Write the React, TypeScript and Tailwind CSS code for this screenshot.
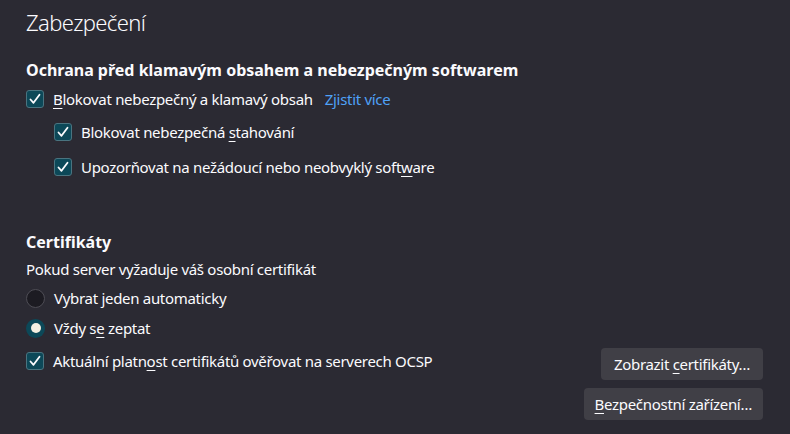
import React from 'react';

const font = { fontFamily: '"Noto Sans", "Open Sans", sans-serif' };

const Check: React.FC = () => (
  <div className="w-[18px] h-[18px] shrink-0 rounded-[3px] bg-[#0c4858] border border-[#4a7480] flex items-center justify-center">
    <svg width="12" height="12" viewBox="0 0 12 12" fill="none">
      <path d="M1.5 6.5 L4.5 9.8 L10.5 1.8" stroke="#fbfbfe" strokeWidth="1.8" strokeLinecap="round" strokeLinejoin="round" />
    </svg>
  </div>
);

const Radio: React.FC<{ checked?: boolean }> = ({ checked }) =>
  checked ? (
    <div className="w-[19px] h-[19px] shrink-0 rounded-full bg-[#0c4858] flex items-center justify-center">
      <div className="w-[10px] h-[10px] rounded-full bg-[#f4efe1]" />
    </div>
  ) : (
    <div className="w-[19px] h-[19px] shrink-0 rounded-full bg-[#1c1b22] border border-[#4e4d55]" />
  );

const U: React.FC<{ children: React.ReactNode }> = ({ children }) => (
  <span className="underline underline-offset-[3px]">{children}</span>
);

export default function App() {
  return (
    <div style={font} className="w-[790px] h-[434px] overflow-hidden bg-[#2b2a33] text-[#fbfbfe] px-[26px] text-[15px] tracking-[-0.3px]">
      <div className="h-[44px] flex items-center text-[22px] font-light tracking-[-0.6px]">Zabezpečení</div>

      {/* Klamavý obsah */}
      <div className="mt-[14px] h-[24px] flex items-center text-[16px] font-bold tracking-normal">
        Ochrana před klamavým obsahem a nebezpečným softwarem
      </div>
      <div className="mt-[2px] h-[30px] flex items-center gap-[9px]">
        <Check />
        <span><U>B</U>lokovat nebezpečný a klamavý obsah</span>
        <span className="ml-[3px] text-[#4fa1f7]">Zjistit více</span>
      </div>
      <div className="pl-[28px]">
        <div className="mt-[3px] h-[30px] flex items-center gap-[9px]">
          <Check />
          <span>Blokovat nebezpečná <U>s</U>tahování</span>
        </div>
        <div className="mt-[5px] h-[30px] flex items-center gap-[9px]">
          <Check />
          <span>Upozorňovat na nežádoucí nebo neobvyklý soft<U>w</U>are</span>
        </div>
      </div>

      {/* Certifikáty */}
      <div className="mt-[48px] h-[24px] flex items-center text-[16px] font-bold tracking-normal">Certifikáty</div>
      <div className="mt-[3px] h-[24px] flex items-center">Pokud server vyžaduje váš osobní certifikát</div>
      <div className="mt-[2px] h-[30px] flex items-center gap-[9px]">
        <Radio />
        <span>Vybrat jeden automaticky</span>
      </div>
      <div className="h-[30px] flex items-center gap-[9px]">
        <Radio checked />
        <span>Vždy s<U>e</U> zeptat</span>
      </div>
      <div className="mt-[3px] flex justify-between">
        <div className="h-[30px] flex items-center gap-[9px]">
          <Check />
          <span>Aktuální platn<U>o</U>st certifikátů ověřovat na serverech OCSP</span>
        </div>
        <div className="mt-[2px] mr-[1px] flex flex-col items-end gap-[8px]">
          <button className="h-[32px] px-[13px] rounded-[4px] bg-[#403f46] tracking-[-0.3px]">
            Zobrazit <U>c</U>ertifikáty…
          </button>
          <button className="h-[32px] px-[11px] rounded-[4px] bg-[#403f46] tracking-[-0.3px]">
            <U>B</U>ezpečnostní zařízení…
          </button>
        </div>
      </div>
    </div>
  );
}
